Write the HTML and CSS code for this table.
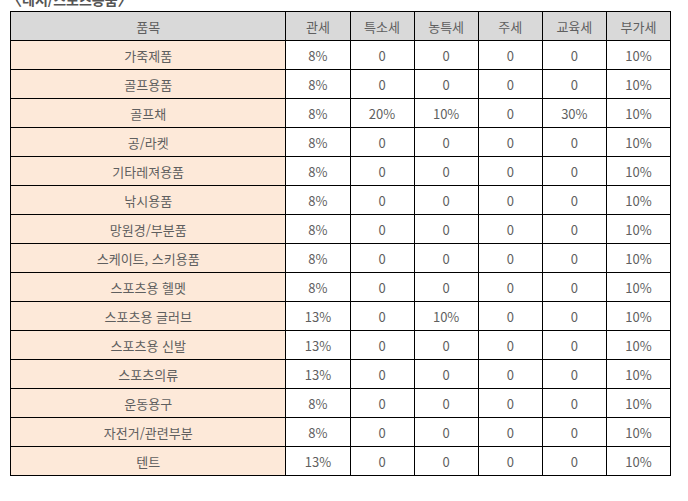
FILE: index.html
```html
<!DOCTYPE html>
<html lang="ko">
<head>
<meta charset="utf-8">
<link rel="stylesheet" href="styles.css">
</head>
<body>
<div class="page">
  <div class="title">〈레저/스포츠용품〉</div>
  <table class="tax">
    <colgroup>
      <col class="c-item"><col class="c-n"><col class="c-n"><col class="c-n"><col class="c-n"><col class="c-n"><col class="c-n">
    </colgroup>
    <thead>
      <tr><th>품목</th><th>관세</th><th>특소세</th><th>농특세</th><th>주세</th><th>교육세</th><th>부가세</th></tr>
    </thead>
    <tbody>
      <tr><td class="item">가죽제품</td><td>8%</td><td>0</td><td>0</td><td>0</td><td>0</td><td>10%</td></tr>
      <tr><td class="item">골프용품</td><td>8%</td><td>0</td><td>0</td><td>0</td><td>0</td><td>10%</td></tr>
      <tr><td class="item">골프채</td><td>8%</td><td>20%</td><td>10%</td><td>0</td><td>30%</td><td>10%</td></tr>
      <tr><td class="item">공/라켓</td><td>8%</td><td>0</td><td>0</td><td>0</td><td>0</td><td>10%</td></tr>
      <tr><td class="item">기타레져용품</td><td>8%</td><td>0</td><td>0</td><td>0</td><td>0</td><td>10%</td></tr>
      <tr><td class="item">낚시용품</td><td>8%</td><td>0</td><td>0</td><td>0</td><td>0</td><td>10%</td></tr>
      <tr><td class="item">망원경/부분품</td><td>8%</td><td>0</td><td>0</td><td>0</td><td>0</td><td>10%</td></tr>
      <tr><td class="item">스케이트, 스키용품</td><td>8%</td><td>0</td><td>0</td><td>0</td><td>0</td><td>10%</td></tr>
      <tr><td class="item">스포츠용 헬멧</td><td>8%</td><td>0</td><td>0</td><td>0</td><td>0</td><td>10%</td></tr>
      <tr><td class="item">스포츠용 글러브</td><td>13%</td><td>0</td><td>10%</td><td>0</td><td>0</td><td>10%</td></tr>
      <tr><td class="item">스포츠용 신발</td><td>13%</td><td>0</td><td>0</td><td>0</td><td>0</td><td>10%</td></tr>
      <tr><td class="item">스포츠의류</td><td>13%</td><td>0</td><td>0</td><td>0</td><td>0</td><td>10%</td></tr>
      <tr><td class="item">운동용구</td><td>8%</td><td>0</td><td>0</td><td>0</td><td>0</td><td>10%</td></tr>
      <tr><td class="item">자전거/관련부분</td><td>8%</td><td>0</td><td>0</td><td>0</td><td>0</td><td>10%</td></tr>
      <tr><td class="item">텐트</td><td>13%</td><td>0</td><td>0</td><td>0</td><td>0</td><td>10%</td></tr>
    </tbody>
  </table>
</div>
</body>
</html>
```
FILE: styles.css
```css
html, body {
  margin: 0;
  padding: 0;
  background: #ffffff;
}
.page {
  padding-left: 10px;
  font-family: "Noto Sans CJK KR", "Noto Sans", sans-serif;
  color: #5f5f5f;
}
.title {
  font-size: 14px;
  line-height: 16px;
  font-weight: bold;
  color: #555555;
  margin-top: -9px;
  height: 16px;
  margin-bottom: 4px;
  margin-left: -2px;
}
.tax {
  border-collapse: collapse;
  table-layout: fixed;
  width: 661px;
  font-size: 13px;
}
.c-item { width: 275px; }
.c-n { width: 64px; }
.tax th, .tax td {
  border: 1px solid #000000;
  height: 29px;
  padding: 0;
  text-align: center;
  vertical-align: middle;
  font-weight: normal;
  line-height: 15px;
  box-sizing: border-box;
}
.tax th {
  background: #d9d9d9;
}
.tax td.item {
  background: #fde9d9;
}
```
